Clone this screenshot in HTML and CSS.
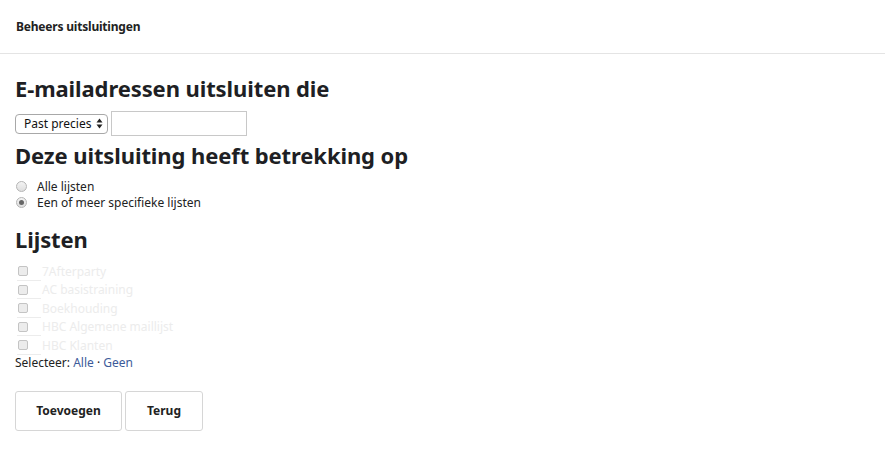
FILE: index.html
```html
<!DOCTYPE html>
<html lang="nl">
<head>
<meta charset="utf-8">
<title>Beheers uitsluitingen</title>
<link rel="stylesheet" href="styles.css">
</head>
<body>
<header class="topbar">
  <h2 class="topbar-title">Beheers uitsluitingen</h2>
</header>
<main class="content">
  <h1 class="section-title">E-mailadressen uitsluiten die</h1>
  <div class="match-row">
    <span class="select">Past precies <svg class="select-arrows" width="7" height="11" viewBox="0 0 7 11"><path d="M3.5 0.5 L6.5 4.5 L0.5 4.5 Z M3.5 10.5 L6.5 6.5 L0.5 6.5 Z" fill="#222"/></svg></span>
    <span class="text-input"></span>
  </div>
  <h1 class="section-title">Deze uitsluiting heeft betrekking op</h1>
  <div class="radios">
    <label class="radio-row"><span class="radio"></span>Alle lijsten</label>
    <label class="radio-row"><span class="radio checked"></span>Een of meer specifieke lijsten</label>
  </div>
  <h1 class="section-title lists-title">Lijsten</h1>
  <ul class="lists">
    <li class="list-item"><span class="checkbox"></span><span class="list-name">7Afterparty</span></li>
    <li class="list-item"><span class="checkbox"></span><span class="list-name">AC basistraining</span></li>
    <li class="list-item"><span class="checkbox"></span><span class="list-name">Boekhouding</span></li>
    <li class="list-item"><span class="checkbox"></span><span class="list-name">HBC Algemene maillijst</span></li>
    <li class="list-item"><span class="checkbox"></span><span class="list-name">HBC Klanten</span></li>
  </ul>
  <p class="select-links">Selecteer: <a href="#">Alle</a> · <a href="#">Geen</a></p>
  <div class="buttons">
    <button class="btn btn-add">Toevoegen</button>
    <button class="btn btn-back">Terug</button>
  </div>
</main>
</body>
</html>
```

FILE: styles.css
```css
* { box-sizing: border-box; }
html, body { margin: 0; padding: 0; background: #fff; }
body {
  font-family: "Noto Sans", "Open Sans", sans-serif;
  color: #222;
  font-size: 12px;
}
.topbar {
  height: 54px;
  border-bottom: 1px solid #e4e4e4;
  padding: 0 16px;
  display: flex;
  align-items: center;
}
.topbar-title {
  margin: 0;
  font-size: 12px;
  font-weight: 700;
  color: #222;
  letter-spacing: -0.2px;
}
.content {
  padding: 18px 15px 0 15px;
}
.section-title {
  margin: 0;
  font-size: 22px;
  font-weight: 700;
  line-height: 32px;
  color: #1e1f24;
  letter-spacing: -0.1px;
}
.match-row {
  display: flex;
  align-items: center;
  gap: 3px;
  margin: 7px 0 3px;
}
.select {
  display: inline-flex;
  align-items: center;
  gap: 5px;
  height: 20px;
  padding: 0 4px 0 8px;
  border: 1px solid #a8a8a8;
  border-radius: 4px;
  font-size: 12px;
  color: #111;
  background: #fff;
}
.select-arrows { display: block; }
.text-input {
  display: block;
  width: 136px;
  height: 25px;
  border: 1px solid #c8c8c8;
  background: #fff;
}
.radios {
  display: flex;
  flex-direction: column;
  margin-top: 7px;
}
.radio-row {
  display: flex;
  align-items: center;
  height: 16px;
  color: #222;
}
.radio {
  width: 11px;
  height: 11px;
  border-radius: 50%;
  border: 1px solid #b5b5b5;
  background: linear-gradient(#f4f4f4, #dedede);
  margin: 0 10px 0 1px;
  display: flex;
  align-items: center;
  justify-content: center;
}
.radio.checked::after {
  content: "";
  width: 5px;
  height: 5px;
  border-radius: 50%;
  background: #666;
}
.lists-title { margin-top: 13px; }
.lists {
  list-style: none;
  margin: 7px 0 0;
  padding: 0;
}
.list-item {
  display: flex;
  align-items: center;
  height: 18.5px;
  position: relative;
}
.list-item::after {
  content: "";
  position: absolute;
  left: 2px;
  bottom: 0;
  width: 24px;
  border-bottom: 1px solid #ececec;
}
.checkbox {
  width: 10px;
  height: 10px;
  border: 1px solid #c4c4c4;
  border-radius: 2px;
  background: #ececec;
  margin: 0 14px 0 3px;
}
.list-name {
  color: #ececec;
  font-size: 12px;
}
.select-links {
  margin: 0;
  line-height: 16px;
  color: #222;
}
.select-links a {
  color: #3d5b9a;
  text-decoration: none;
}
.buttons {
  display: flex;
  gap: 3px;
  margin-top: 20px;
}
.btn {
  height: 40px;
  border: 1px solid #d6d6d6;
  border-radius: 3px;
  background: #fff;
  font-family: inherit;
  font-size: 12px;
  font-weight: 700;
  color: #222;
  padding: 0;
}
.btn-add { width: 107px; }
.btn-back { width: 78px; }
```
